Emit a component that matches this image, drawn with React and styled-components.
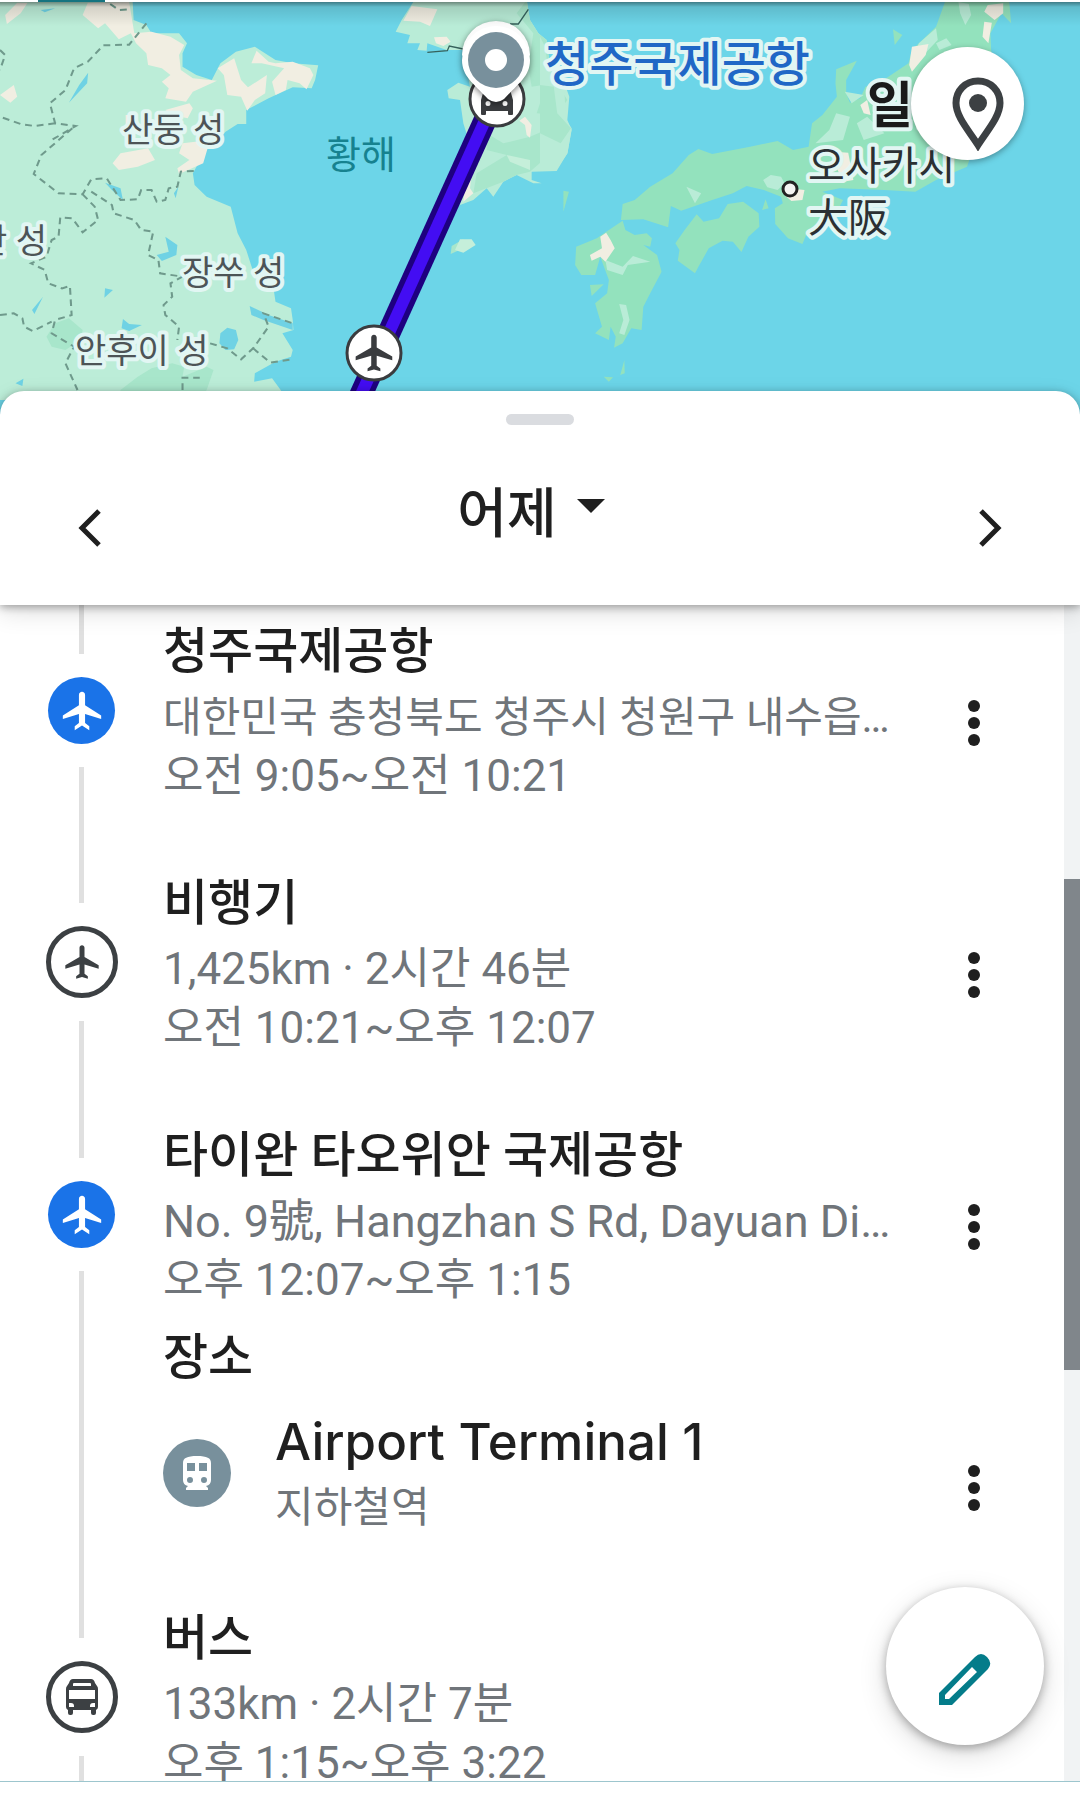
import React from 'react';
import styled, { createGlobalStyle } from 'styled-components';

const entries = [
  {
    kind: 'place',
    icon: 'airport',
    title: '청주국제공항',
    detail: '대한민국 충청북도 청주시 청원구 내수읍…',
    detailSize: 42,
    time: '오전 9:05~오전 10:21',
  },
  {
    kind: 'move',
    icon: 'plane',
    title: '비행기',
    detail: '1,425km · 2시간 46분',
    detailSize: 44,
    time: '오전 10:21~오후 12:07',
  },
  {
    kind: 'place',
    icon: 'airport',
    title: '타이완 타오위안 국제공항',
    detail: 'No. 9號, Hangzhan S Rd, Dayuan Di…',
    detailSize: 45,
    time: '오후 12:07~오후 1:15',
    stops: [{ title: 'Airport Terminal 1', detail: '지하철역' }],
  },
  {
    kind: 'move',
    icon: 'bus',
    title: '버스',
    detail: '133km · 2시간 7분',
    detailSize: 44,
    time: '오후 1:15~오후 3:22',
  },
];

const PLANE =
  'M22 16v-2l-8.5-5V3.5c0-.83-.67-1.5-1.5-1.5s-1.5.67-1.5 1.5V9L2 14v2l8.5-2.5V19L8.5 20.5V22l3.5-1 3.5 1v-1.5L13.5 19v-5.5z';
const AIRPORT =
  'M22 16.2v-1.9L13.6 9V3.6C13.6 2.7 12.9 2 12 2s-1.6.7-1.6 1.6V9L2 14.300v1.9l8.400-2.700v4.700L8.200 20v2l3.800-2.400 3.800 2.400v-2l-2.200-1.800v-4.700z';

const PlaneIcon = ({ size }) => (
  <svg width={size} height={size} viewBox="0 0 24 24" fill="currentColor" aria-hidden="true">
    <path d={PLANE} />
  </svg>
);

const AirportIcon = () => (
  <svg width="46" height="46" viewBox="0 0 24 24" fill="currentColor" aria-hidden="true">
    <path d={AIRPORT} />
  </svg>
);

const BusIcon = () => (
  <svg width="32" height="36" viewBox="0 0 32 36" aria-hidden="true">
    <path
      fill="currentColor"
      fillRule="evenodd"
      d="M7 0h18q3 0 4 4l2 3q1 1 1 3v18q0 2-2 3v3q0 2-2 2h-1q-2 0-2-2v-3H7v3q0 2-2 2H4q-2 0-2-2v-3q-2-1-2-3V10q0-2 1-3l2-3q1-4 4-4zM8 4Q7 4 7 5v2h18V5q0-1-1-1zM3 11v9h26v-9zM3 24v4h5v-1q0-3-3-3zM29 24v4h-5v-1q0-3 3-3z"
    />
  </svg>
);

const TrainIcon = () => (
  <svg width="28" height="34" viewBox="0 0 28 34" aria-hidden="true">
    <path
      fill="currentColor"
      fillRule="evenodd"
      d="M14 0C4 0 0 2 0 7v17q0 5 5 6l-2 2v2h22v-2l-2-2q5-1 5-6V7c0-5-4-7-14-7zM4 7h8v8H4zM16 7h8v8h-8zM7 21a3 3 0 1 1 0 6a3 3 0 0 1 0-6zM21 21a3 3 0 1 1 0 6a3 3 0 0 1 0-6z"
    />
  </svg>
);

const icons = {
  airport: <AirportIcon />,
  plane: <PlaneIcon size={40} />,
  bus: <BusIcon />,
};

const China = () => (
  <svg x="0" y="-2" width="540" height="400" viewBox="0 0 1568 1200" preserveAspectRatio="none">
    <path
      fill="#bcedd8"
      d="M0 0H385L388 60 425 75 440 100 520 100 543 130 530 160V200L570 225 615 240 640 190 685 155 740 140 800 180 850 190 924 196 915 240 905 265 850 262 780 295 715 330V372H690L655 395 600 445 560 520 565 555 600 590 670 620 690 700 715 750 740 830 795 870 800 905 845 925 850 960 852 990 820 1000 850 1050 845 1070 800 1085 740 1120 738 1145 790 1135 815 1170 850 1240H0z"
    />
    <path
      fill="#a8e6cb"
      d="M160 970 200 955 240 990 235 1020 190 1050 150 1040 135 1010zM350 1170 400 1130 440 1105 500 1090 535 1100 530 1130 600 1100 620 1110 600 1170 560 1220H340z"
    />
    <path
      fill="#f1eee2"
      d="M255 8 375 6 390 100 440 95 495 110 535 135 520 165 525 210 560 235 630 242 560 275 540 305 480 295 490 265 470 245 495 225 470 205 430 195 425 160 395 130 380 100 345 118 305 70 285 85 240 45zM15 45 50 8H80L60 40 20 72zM0 285 40 255 50 290 30 308zM632 205 680 175 700 240 720 262 775 225 770 280 740 300 718 332 700 290 660 285 650 225zM745 152 780 185 800 190 850 185 900 205 910 225 890 268 870 250 835 240 830 270 800 285 790 245 825 205 760 190 730 190zM480 330 550 310 560 325 545 355 500 345zM365 345 400 345 400 385 365 380zM350 460 430 445 450 480 400 500 345 510 327 490zM530 430 610 420 590 490 520 522 515 505 550 480 520 460z"
    />
    <path
      fill="#6fd2e4"
      d="M118 30 160 25 130 37zM256 218 253 250 200 308 230 255zM305 548 350 565 357 600 325 570zM480 710 515 735 512 765 470 783 455 765 490 755zM305 865 328 870 303 893zM125 890 100 942 93 930zM357 957 375 972 412 975 375 993 353 985zM640 1000 660 983 685 990 692 1020 680 1048 655 1050 637 1030zM725 918 780 945 850 970 850 990 765 960 730 945zM45 1150 68 1136 65 1158zM518 560 510 595 505 580z"
    />
    <path
      fill="none"
      stroke="#6f9a8c"
      strokeWidth="6"
      strokeDasharray="20 14"
      d="M425 70 375 134 300 136 255 185 215 205 190 270 145 310 160 370 220 378 150 420 M160 370 100 378 60 372 0 350 M210 385 120 465 98 522 170 580 240 583 265 538 310 535 350 600 400 598 410 570 440 570 455 605 480 600 490 565 515 560 525 515 575 512 M240 583 275 620 285 660 240 697 210 655 175 652 170 710 150 720 135 770 90 790 130 810 140 850 180 865 203 858 208 945 160 960 150 1000 215 1040 190 1090 225 1170 M265 575 325 615 330 640 390 660 410 690 445 695 430 765 460 780 465 820 530 830 495 850 500 890 475 915 480 945 520 980 515 1020 M0 945 40 940 65 955 70 980 95 993 150 965 M610 1030 660 1045 700 1078 735 1045 780 980 765 940 850 970 M735 1045 785 1088 850 1078 M530 1170V1133H580 M320 12 345 30 380 28 M0 150 15 165 0 210"
    />
  </svg>
);

const Korea = () => (
  <svg x="330" y="-2" width="300" height="400" viewBox="0 0 900 1200">
    <path
      fill="#b9ecd7"
      d="M250 6 215 60 197 95 240 105 232 130 270 130 262 150 290 152 292 130 350 150 400 150 420 260 385 248 352 270 356 295 390 300 400 370 425 450 430 510 400 560 390 615 430 600 470 565 490 590 520 545 560 525 610 550H635L605 540V515L680 513 712 460 725 390 712 360 718 290 700 240 660 200 650 120 625 100 600 60 590 0z"
    />
    <path
      fill="#a8e6cb"
      d="M590 0 600 60 625 100 650 120 660 200 700 245 605 260 595 200 610 100 560 40zM640 280 690 265 712 300 680 345 620 340zM470 400 520 430 600 410 660 385 715 390 705 430 640 440 640 480 600 515 560 525 520 545 430 580 440 520 530 465 470 450zM365 738 400 718 400 745 362 762z"
    />
    <path fill="#c5efda" d="M390 718 425 718 437 735 400 758 375 750zM530 465 600 480 600 510 540 485z" />
    <path
      fill="#f1eee2"
      d="M245 18 322 28 300 78 270 65 220 62zM312 112 350 110 362 125 340 138 318 130zM568 362 585 350 605 375 600 413 590 405 585 375zM425 515 420 565 430 580 400 605 405 550z"
    />
    <path fill="none" stroke="#36625c" strokeWidth="4" d="M292 157 352 152 358 138 400 147M540 72H565L595 28" />
  </svg>
);

const Japan = () => (
  <svg x="540" y="-2" width="540" height="400" viewBox="0 0 1568 1200" preserveAspectRatio="none">
    <path
      fill="#93e2bd"
      d="M1178 0 1150 80 1080 150 1070 190 990 245 945 260 930 295 900 308 889 280 889 240 920 182 860 208 858 250 862 290 820 345 790 370 780 440 735 450 690 423 610 440 500 462 460 447 432 465 385 520 320 560 275 600 240 612 235 660 300 658 372 682 380 618 410 632 500 600 560 580 600 558 650 570 700 590 705 610 682 625 683 672 720 715 762 732 775 700 860 640 880 600 820 575 870 565 1000 570 1090 575 1150 540 1240 500 1250 470 1300 440 1340 300 1310 150 1308 100 1340 40 1368 70 1362 0zM455 643 475 665 520 655 545 612 590 605 635 640 637 680 605 710 585 756 560 725 530 722 490 745 460 800 450 820 400 782 405 750 393 730 420 690zM240 662 248 690 275 705 310 700 325 715 320 740 300 735 340 765 353 815 320 880 300 920 295 990 265 985 240 1030 215 1043 220 1010 205 980 200 1020 160 1000 180 980 160 910 195 880 200 840 175 770 160 825 120 825 102 795 105 740 165 715 200 690zM1025 88 1052 105 1030 135zM145 855 185 853 150 888zM68 572 84 575 68 635zM655 598 664 625 645 630zM245 1080 246 1120 233 1125zM185 1130 212 1132 200 1145z"
    />
    <path
      fill="#b9ecd7"
      d="M0 110 15 140 20 180 70 250 75 360 92 385 80 460 45 512H0zM1215 6 1245 12 1252 45 1235 75 1220 40zM1150 85 1155 120 1100 180 1080 185 1100 130zM648 540 670 525 700 530 710 550 690 570 660 562zM425 560 468 580 450 610zM190 780 240 800 270 768 320 785 255 795 240 825 195 810zM230 912 250 915 260 960 245 1005 230 1000 242 960zM885 275 940 285 905 310zM860 340 900 350 880 420 800 430 840 390zM1150 130 1180 115 1195 135 1160 150zM920 370 950 350 1000 400 940 420z"
    />
    <path fill="#a8e6cb" d="M0 255 40 260 50 340 90 385 60 430 0 400z" />
    <path
      fill="#f1eee2"
      d="M1300 15 1345 10 1345 40 1320 60 1290 35zM1290 65 1312 68 1302 130 1285 110zM1080 140 1128 132 1120 165 1080 215 1072 195zM192 698 205 720 217 745 190 785 175 770 150 782 145 765 180 745 175 710zM720 565 768 570 762 600 730 603 710 585zM855 455 895 458 910 540 880 545 860 500zM930 315 950 300 960 345 940 340z"
    />
  </svg>
);

const TripMap = () => (
  <MapDrawing viewBox="0 0 1080 412" preserveAspectRatio="xMidYMin slice">
    <China />
    <Korea />
    <Japan />
    <g fill="none" strokeLinecap="butt">
      <path d="M492 103 350 417" stroke="#1e0080" strokeWidth="23" />
      <path d="M492 103 350 417" stroke="#430df3" strokeWidth="12" />
    </g>
    <circle cx="790" cy="187" r="7" fill="#f4f4f2" stroke="#222" strokeWidth="3" />
    <MapLabel x="122" y="140">산둥 성</MapLabel>
    <MapLabel x="47" y="251" textAnchor="end">허난 성</MapLabel>
    <MapLabel x="182" y="283">장쑤 성</MapLabel>
    <MapLabel x="75" y="361">안후이 성</MapLabel>
    <SeaLabel x="326" y="166">황해</SeaLabel>
    <AirportLabel x="545" y="79">청주국제공항</AirportLabel>
    <CountryLabel x="867" y="121">일본</CountryLabel>
    <CityLabel x="808" y="178">오사카시</CityLabel>
    <CityLabel x="808" y="230">大阪</CityLabel>
    <g fill="#fff" stroke="#3a3c3f" strokeWidth="3">
      <circle cx="497" cy="97" r="27" />
      <circle cx="374" cy="351" r="27" />
    </g>
    <path
      fill="#3a3c3f"
      fillRule="evenodd"
      d="M481 98 485 84H509L513 98V112Q513 113 512 113H509Q508 113 508 112V109H486V112Q486 113 485 113H482Q481 113 481 112zM488 99A2.500 2.500 0 1 0 488 104A2.500 2.500 0 1 0 488 99zM505 99A2.500 2.500 0 1 0 505 104A2.500 2.500 0 1 0 505 99z"
    />
    <g transform="translate(352 329) scale(1.830)">
      <path d={PLANE} fill="#3a3c3f" />
    </g>
    <Pin>
      <path fill="#fbfbfb" d="M496 19a34 34 0 0 1 34 34L496 90 462 53a34 34 0 0 1 34-34z" />
      <path fill="#fff" d="M496 24a34 34 0 0 1 34 34C530 74 519 81 504 97Q496 103 488 97C473 81 462 74 462 58a34 34 0 0 1 34-34z" />
    </Pin>
    <circle cx="496" cy="58" r="28" fill="#78909c" />
    <circle cx="496" cy="58" r="11" fill="#fff" />
  </MapDrawing>
);

const MoreButton = ({ label }) => (
  <More type="button" aria-label={label}>
    <svg width="12" height="46" viewBox="0 0 12 46" fill="currentColor" aria-hidden="true">
      <circle cx="6" cy="6" r="6" />
      <circle cx="6" cy="23" r="6" />
      <circle cx="6" cy="40" r="6" />
    </svg>
  </More>
);

const Entry = ({ entry }) => (
  <EntryRow>
    <Rail $kind={entry.kind}>
      <Badge $kind={entry.kind}>{icons[entry.icon]}</Badge>
    </Rail>
    <EntryBody>
      <EntryMain>
        <Texts>
          <Title>{entry.title}</Title>
          <Detail $size={entry.detailSize}>{entry.detail}</Detail>
          <Detail $size={44}>{entry.time}</Detail>
        </Texts>
        <MoreButton label={`${entry.title} 옵션 더보기`} />
      </EntryMain>
      {entry.stops && (
        <Stops>
          <StopsTitle>장소</StopsTitle>
          {entry.stops.map((stop) => (
            <Stop key={stop.title}>
              <StopIcon>
                <TrainIcon />
              </StopIcon>
              <Texts>
                <StopTitle>{stop.title}</StopTitle>
                <Detail $size={42}>{stop.detail}</Detail>
              </Texts>
              <MoreButton label={`${stop.title} 옵션 더보기`} />
            </Stop>
          ))}
        </Stops>
      )}
    </EntryBody>
  </EntryRow>
);

const App = () => {
  return (
    <>
      <GlobalStyle />
      <Page>
        <TabStrip>
          <ActiveTab />
        </TabStrip>
        <MapArea>
          <TripMap />
          <PlaceButton type="button" aria-label="장소 표시">
            <svg width="52" height="74" viewBox="0 0 52 74" aria-hidden="true">
              <path
                fill="none"
                stroke="currentColor"
                strokeWidth="7"
                d="M26 4C13 4 4 14 4 26C4 40 18 55 26 68C34 55 48 40 48 26C48 14 39 4 26 4z"
              />
              <circle cx="26" cy="26" r="9" fill="currentColor" />
            </svg>
          </PlaceButton>
        </MapArea>
        <Sheet>
          <Handle />
          <DayBar>
            <ArrowButton type="button" aria-label="이전 날짜">
              <svg width="24" height="38" viewBox="0 0 24 38" aria-hidden="true">
                <path d="M21 2 4 19 21 36" fill="none" stroke="currentColor" strokeWidth="5" />
              </svg>
            </ArrowButton>
            <DayButton type="button">
              어제
              <svg width="28" height="14" viewBox="0 0 28 14" fill="currentColor" aria-hidden="true">
                <path d="M0 0H28L14 14z" />
              </svg>
            </DayButton>
            <ArrowButton type="button" aria-label="다음 날짜">
              <svg width="24" height="38" viewBox="0 0 24 38" aria-hidden="true">
                <path d="M3 2 20 19 3 36" fill="none" stroke="currentColor" strokeWidth="5" />
              </svg>
            </ArrowButton>
          </DayBar>
        </Sheet>
        <Timeline>
          <Entries>
            {entries.map((entry) => (
              <Entry key={entry.time} entry={entry} />
            ))}
          </Entries>
          <Track>
            <Thumb />
          </Track>
          <EditButton type="button" aria-label="수정">
            <svg width="52" height="52" viewBox="0 0 52 52" aria-hidden="true">
              <path
                fill="currentColor"
                fillRule="evenodd"
                d="M0 40 36 4Q42-2 48 4Q54 10 49 16L13 52H0zM6 42V46H10L38 19 33 14z"
              />
            </svg>
          </EditButton>
        </Timeline>
        <BottomStrip />
      </Page>
    </>
  );
};

const GlobalStyle = createGlobalStyle`
  * {
    box-sizing: border-box;
  }

  body {
    margin: 0;
    background-color: #ffffff;
    color: #1f1f1f;
    font-family: Roboto, "Noto Sans CJK KR", sans-serif;
  }

  button {
    padding: 0;
    border: none;
    background: none;
    color: inherit;
    font: inherit;
    cursor: pointer;
  }

  svg {
    display: block;
    flex-shrink: 0;
  }
`;

const Page = styled.div`
  display: flex;
  flex-direction: column;
  height: 100vh;
  overflow: hidden;
`;

const TabStrip = styled.div`
  display: flex;
  height: 2px;
  padding-left: 38px;
  background-color: #ffffff;
`;

const ActiveTab = styled.div`
  width: 67px;
  background-color: #157480;
`;

const MapArea = styled.div`
  position: relative;
  flex-shrink: 0;
  height: 412px;
  margin-bottom: -23px;
  background-color: #6cd5e8;

  &::before {
    content: '';
    position: absolute;
    inset: 0 0 auto;
    height: 24px;
    background: linear-gradient(rgba(0, 0, 0, 0.42), rgba(0, 0, 0, 0.12) 5px, transparent);
  }
`;

const MapDrawing = styled.svg`
  width: 100%;
  height: 100%;
  font-family: Roboto, 'Noto Sans CJK KR', sans-serif;
`;

const Label = styled.text`
  paint-order: stroke;
  stroke: #e2f6f3;
  stroke-width: 8px;
  stroke-linejoin: round;
`;

const MapLabel = styled(Label)`
  fill: #4d5457;
  font-size: 34px;
`;

const SeaLabel = styled.text`
  fill: #16828f;
  font-size: 38px;
`;

const AirportLabel = styled(Label)`
  fill: #2067c6;
  font-size: 48px;
  font-weight: 500;
`;

const CountryLabel = styled(Label)`
  fill: #1a1a1a;
  font-size: 50px;
  font-weight: 700;
`;

const CityLabel = styled(Label)`
  fill: #2b3033;
  font-size: 40px;
`;

const Pin = styled.g`
  filter: drop-shadow(0 2px 3px rgba(0, 0, 0, 0.5));
`;

const PlaceButton = styled.button`
  position: absolute;
  top: 45px;
  right: 56px;
  display: flex;
  align-items: center;
  justify-content: center;
  width: 113px;
  height: 113px;
  padding: 20px 0 0 20px;
  border-radius: 50%;
  background-color: #ffffff;
  box-shadow: 0 2px 6px rgba(0, 0, 0, 0.35);
  color: #3c4043;
`;

const Sheet = styled.header`
  position: relative;
  z-index: 1;
  display: flex;
  flex-direction: column;
  align-items: center;
  flex-shrink: 0;
  height: 214px;
  padding-top: 23px;
  border-radius: 24px 24px 0 0;
  background-color: #ffffff;
  box-shadow: 0 2px 8px rgba(0, 0, 0, 0.35), 0 8px 24px rgba(0, 0, 0, 0.12);
`;

const Handle = styled.div`
  width: 68px;
  height: 11px;
  border-radius: 6px;
  background-color: #dadce0;
`;

const DayBar = styled.div`
  display: flex;
  align-items: flex-start;
  justify-content: space-between;
  width: 100%;
  padding: 48px 66px 0;
`;

const ArrowButton = styled.button`
  display: flex;
  align-items: center;
  justify-content: center;
  width: 48px;
  height: 110px;
`;

const DayButton = styled.button`
  display: flex;
  align-items: center;
  gap: 20px;
  height: 72px;
  padding-right: 18px;
  font-size: 54px;
  font-weight: 500;

  svg {
    margin-bottom: 6px;
  }
`;

const Timeline = styled.main`
  position: relative;
  display: flex;
  flex: 1;
  min-height: 0;
  overflow: hidden;
`;

const Entries = styled.ol`
  flex: 1;
  min-width: 0;
  margin: 0;
  padding: 0;
  list-style: none;
`;

const EntryRow = styled.li`
  display: flex;
`;

const Rail = styled.div`
  display: flex;
  flex-direction: column;
  align-items: center;
  gap: 23px;
  width: 163px;
  flex-shrink: 0;

  &::before,
  &::after {
    content: '';
    width: 5px;
    background-color: #e0e0e0;
  }

  &::before {
    height: ${(props) => (props.$kind === 'place' ? 49 : 46)}px;
  }

  &::after {
    flex: 1;
  }
`;

const Badge = styled.div`
  display: flex;
  align-items: center;
  justify-content: center;
  width: ${(props) => (props.$kind === 'place' ? 67 : 72)}px;
  height: ${(props) => (props.$kind === 'place' ? 67 : 72)}px;
  border: ${(props) => (props.$kind === 'place' ? 'none' : '5px solid #3c4043')};
  border-radius: 50%;
  background-color: ${(props) => (props.$kind === 'place' ? '#1a73e8' : '#ffffff')};
  color: ${(props) => (props.$kind === 'place' ? '#ffffff' : '#3c4043')};
`;

const EntryBody = styled.div`
  flex: 1;
  min-width: 0;
`;

const EntryMain = styled.div`
  display: flex;
  align-items: flex-start;
  height: 252px;
  padding-top: 13px;
`;

const Texts = styled.div`
  flex: 1;
  min-width: 0;
`;

const Title = styled.h2`
  margin: 0 0 2px;
  font-size: 49px;
  font-weight: 500;
  line-height: 68px;
`;

const Detail = styled.p`
  margin: 0;
  overflow: hidden;
  color: #70757a;
  font-size: ${(props) => props.$size}px;
  line-height: 59px;
  text-overflow: ellipsis;
  white-space: nowrap;
`;

const More = styled.button`
  display: flex;
  align-items: center;
  justify-content: center;
  flex-shrink: 0;
  width: 48px;
  height: 80px;
  margin: 65px 66px 0 30px;
`;

const Stops = styled.div`
  height: 231px;
  margin-top: -37px;
  margin-bottom: 37px;
`;

const StopsTitle = styled(Title)`
  margin: 0;
`;

const Stop = styled.div`
  display: flex;
  align-items: flex-start;
  padding-top: 16px;

  ${More} {
    margin-top: 40px;
  }
`;

const StopIcon = styled.div`
  display: flex;
  align-items: center;
  justify-content: center;
  width: 68px;
  height: 68px;
  margin: 31px 44px 0 0;
  border-radius: 50%;
  background-color: #78909c;
  color: #ffffff;
`;

const StopTitle = styled(Title)`
  font-family: Inter, sans-serif;
  font-size: 51px;
`;

const Track = styled.div`
  width: 16px;
  background-color: #f1f3f4;
`;

const Thumb = styled.div`
  height: 491px;
  margin-top: 274px;
  background-color: #80868b;
`;

const EditButton = styled.button`
  position: absolute;
  right: 36px;
  bottom: 36px;
  display: flex;
  align-items: center;
  justify-content: center;
  width: 158px;
  height: 158px;
  padding-top: 26px;
  border-radius: 50%;
  background-color: #ffffff;
  box-shadow: 0 3px 10px rgba(0, 0, 0, 0.3), 0 8px 28px rgba(0, 0, 0, 0.15);
  color: #047c8a;
`;

const BottomStrip = styled.div`
  flex-shrink: 0;
  height: 18px;
  border-top: 1px solid #9dc6ce;
  background-color: #ffffff;
`;

export default App;
